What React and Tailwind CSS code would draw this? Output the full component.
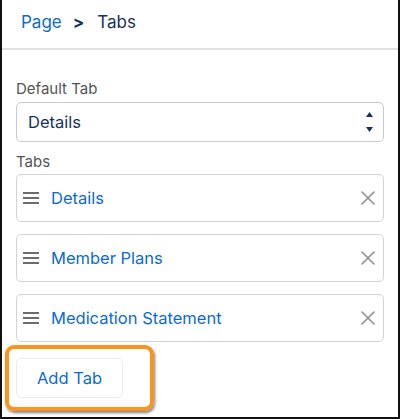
import React from "react";

function Hamburger() {
  return (
    <svg width="16" height="12" viewBox="0 0 16 12" className="shrink-0">
      <rect x="0" y="0" width="16" height="2" fill="#6b6b6b" />
      <rect x="0" y="5" width="16" height="2" fill="#6b6b6b" />
      <rect x="0" y="10" width="16" height="2" fill="#6b6b6b" />
    </svg>
  );
}

function CloseX() {
  return (
    <svg width="14" height="14" viewBox="0 0 14 14" className="shrink-0">
      <path d="M1 1 L13 13 M13 1 L1 13" stroke="#8e8e8e" strokeWidth="1.6" strokeLinecap="round" />
    </svg>
  );
}

function TabRow({ label }) {
  return (
    <div className="h-[48px] flex items-center border border-[#d4d4d4] rounded-[5px] pl-[6px] pr-[8px]">
      <Hamburger />
      <span className="ml-[12px] text-[16.5px] text-[#0b6bd0] flex-1">{label}</span>
      <CloseX />
    </div>
  );
}

export default function App() {
  return (
    <div
      className="w-[400px] h-[419px] bg-white border-l-2 border-r-2 border-b-2 border-[#111] flex flex-col"
      style={{ fontFamily: "Inter, 'Liberation Sans', sans-serif" }}
    >
      <div className="h-[50px] shrink-0 border-b-2 border-[#e2e2e2] pl-[19px] pt-[11px]">
        <div className="flex items-center text-[17px] leading-[22px]">
          <span className="text-[#0b6bd0]">Page</span>
          <span className="ml-[11px] text-[#16325c] font-bold">&gt;</span>
          <span className="ml-[13px] text-[#16325c]">Tabs</span>
        </div>
      </div>
      <div className="px-[14px] pt-[29px] flex flex-col">
        <div className="text-[15px] leading-[20px] h-[20px] text-[#545454]">Default Tab</div>
        <div className="mt-[3px] h-[40px] flex items-center border border-[#c9c9c9] rounded-[5px] pl-[11px] pr-[10px]">
          <span className="flex-1 text-[16.5px] text-[#16325c]">Details</span>
          <svg width="7" height="21" viewBox="0 0 7 21">
            <path d="M3.5 0 L7 5 L0 5 Z" fill="#16325c" />
            <path d="M0 15 L7 15 L3.5 20 Z" fill="#16325c" />
          </svg>
        </div>
        <div className="mt-[10px] text-[15px] leading-[20px] h-[20px] text-[#545454]">Tabs</div>
        <div className="mt-[2px] flex flex-col gap-[12px]">
          <TabRow label="Details" />
          <TabRow label="Member Plans" />
          <TabRow label="Medication Statement" />
        </div>
        <div className="mt-[16px] relative self-start">
          <button className="h-[40px] w-[107px] border border-[#ececec] rounded-[5px] bg-white text-[16.5px] text-[#0b6bd0]">
            Add Tab
          </button>
          <div className="pointer-events-none absolute left-[-11px] top-[-13px] w-[149px] h-[66px] border-[4px] border-[#f8941f] rounded-[9px] shadow-[1px_2px_3px_rgba(0,0,0,0.5)]" />
        </div>
      </div>
    </div>
  );
}
